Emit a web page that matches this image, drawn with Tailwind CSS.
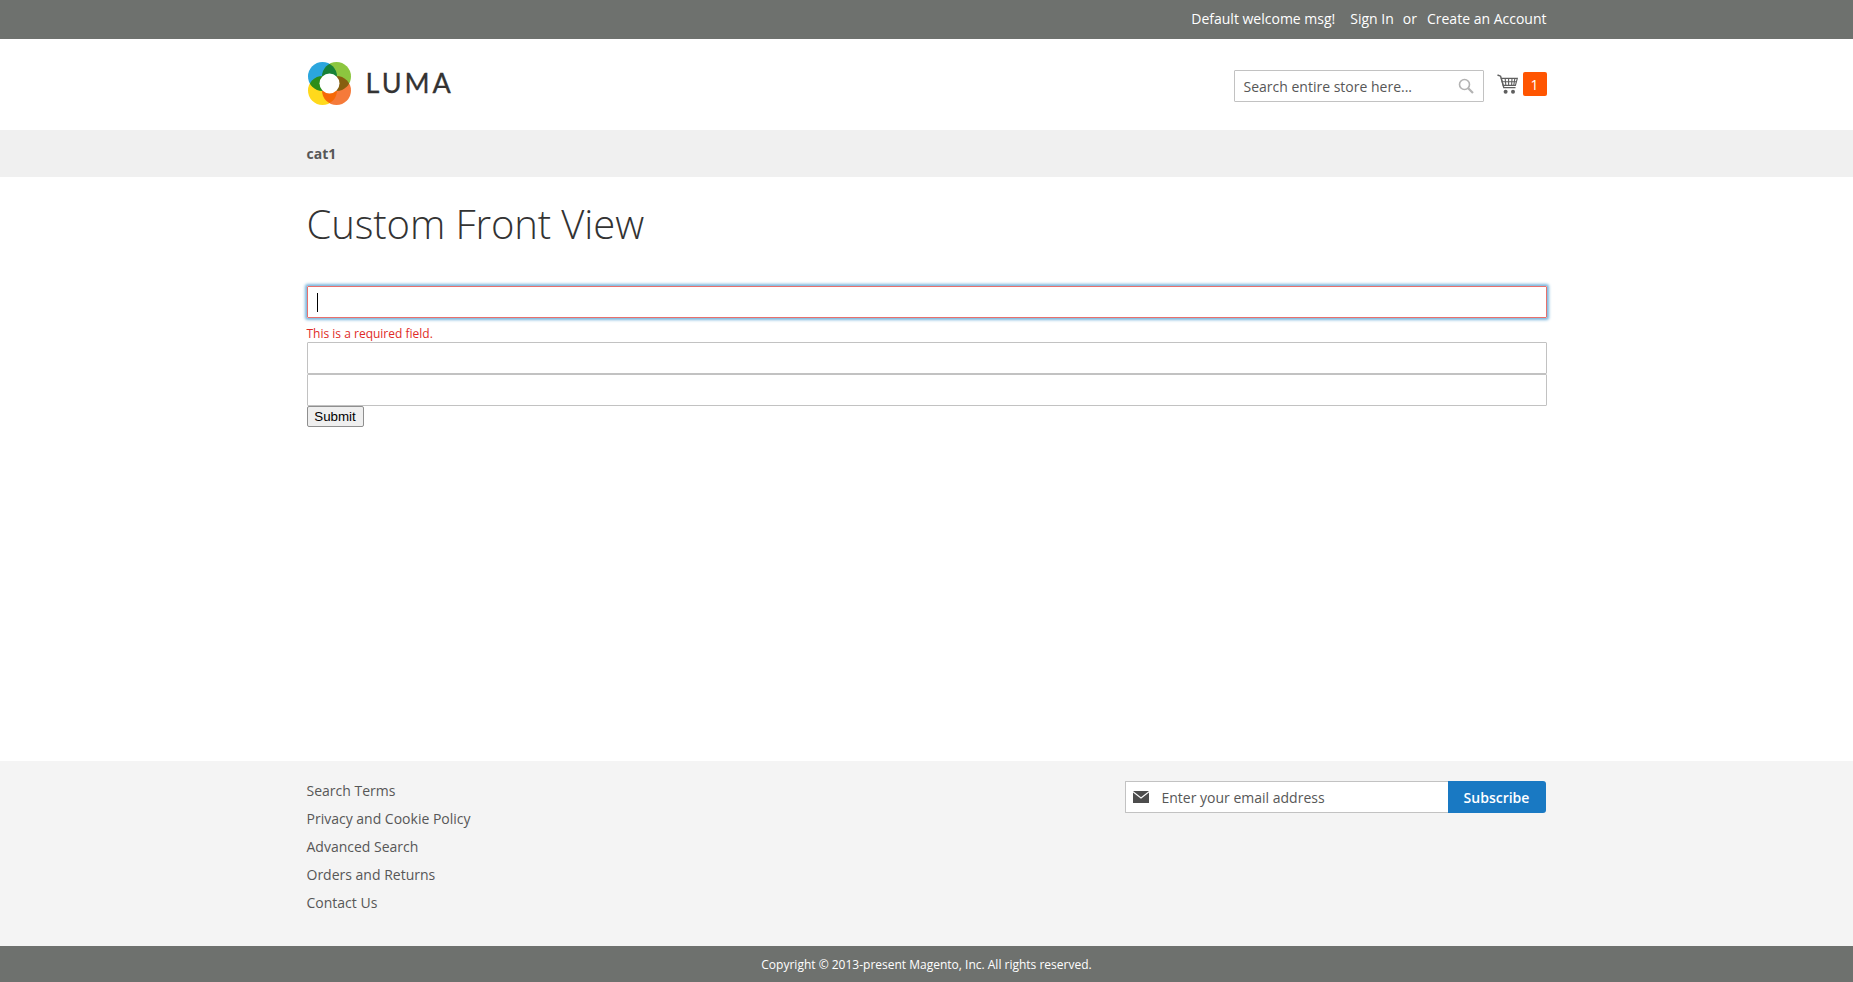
<!DOCTYPE html>
<html lang="en">
<head>
    <meta charset="UTF-8">
    <title>Custom Front View</title>
    <script src="https://cdn.jsdelivr.net/npm/@tailwindcss/browser@4"></script>
</head>
<body class="font-['Open_Sans',sans-serif] text-[14px] text-[#333] bg-white">
    <div class="flex flex-col h-[982px] overflow-hidden">
        <!-- top bar -->
        <div class="bg-[#6e716e] h-[39px] shrink-0">
            <div class="w-[1240px] ml-[306.5px] h-full flex justify-end items-center text-white pb-[2px]">
                <span>Default welcome msg!</span>
                <a class="ml-[15px]">Sign In</a>
                <span class="ml-[9px]">or</span>
                <a class="ml-[10px]">Create an Account</a>
            </div>
        </div>

        <!-- header -->
        <div class="h-[91px] shrink-0 bg-white">
            <div class="w-[1240px] ml-[306.5px] h-full flex items-start justify-between">
                <div class="flex items-center mt-[22px]">
                    <svg width="45" height="45" viewBox="0 0 45 45" class="isolate">
                        <g style="mix-blend-mode:multiply"><circle cx="15.5" cy="15.5" r="14.5" fill="#2ba6de"/></g>
                        <g style="mix-blend-mode:multiply"><circle cx="29.5" cy="15.5" r="14.5" fill="#8cc63f"/></g>
                        <g style="mix-blend-mode:multiply"><circle cx="15.5" cy="29.5" r="14.5" fill="#ffd91c"/></g>
                        <g style="mix-blend-mode:multiply"><circle cx="29.5" cy="29.5" r="14.5" fill="#f57a3a"/></g>
                        <circle cx="22.5" cy="22.5" r="10" fill="#fff"/>
                    </svg>
                    <span class="ml-[14px] mb-[2px] font-['Lato',sans-serif] text-[27px] leading-none tracking-[3px] font-normal text-[#333] [-webkit-text-stroke:0.3px_#333]">LUMA</span>
                </div>
                <div class="flex items-start mt-[31px]">
                    <div class="w-[250px] h-[32px] border border-[#c2c2c2] bg-white rounded-[1px] flex items-center justify-between pl-[9px] pr-[9px]">
                        <span class="text-[#575757]">Search entire store here...</span>
                        <svg width="16" height="16" viewBox="0 0 16 16" fill="none" stroke="#b3b3b3" stroke-width="1.6"><circle cx="6.5" cy="6.5" r="5"/><path d="M10.2 10.2 15 15" stroke-width="2.2"/></svg>
                    </div>
                    <svg width="21" height="21" viewBox="0 0 21 21" class="ml-[13px] mt-[4px]" fill="none" stroke="#5f5f5f">
                        <path d="M0.5 1 3.6 2.2 6.8 13.6H18.5" stroke-width="1.4"/>
                        <path d="M4.3 4.4H20.3L18.4 11.4H6.2Z" stroke-width="1.1"/>
                        <path d="M8.2 4.6 8.8 11.2M11.6 4.6V11.2M15 4.6 14.6 11.2M17.8 4.6 16.8 11.2M5 7.8H19.4" stroke-width="1.1"/>
                        <circle cx="8.6" cy="17.8" r="2" fill="#5f5f5f" stroke="none"/><circle cx="16" cy="17.8" r="2" fill="#5f5f5f" stroke="none"/>
                    </svg>
                    <span class="ml-[5px] mt-[2px] w-[24px] h-[24px] bg-[#ff5501] rounded-[2px] text-white flex items-center justify-center text-[14px]">1</span>
                </div>
            </div>
        </div>

        <!-- nav -->
        <div class="h-[47px] shrink-0 bg-[#f0f0f0]">
            <div class="w-[1240px] ml-[306.5px] h-full flex items-center font-bold text-[#575757]">cat1</div>
        </div>

        <!-- main -->
        <main class="flex-1">
            <div class="w-[1240px] ml-[306.5px]">
                <h1 class="text-[40px] font-light leading-[50px] text-[#333] pt-[22px] tracking-[-0.1px]">Custom Front View</h1>
                <form class="mt-[37px]">
                    <div class="relative h-[32px] border border-[#e8706c] rounded-[1px] shadow-[0_0_3px_2px_#7ab5dc] flex items-center pl-[9px]">
                        <span class="w-[1px] h-[19px] bg-black"></span>
                    </div>
                    <div class="text-[12px] text-[#e02b27] leading-[16px] h-[24px] pt-[8px]">This is a required field.</div>
                    <div class="h-[32px] border border-[#c2c2c2] rounded-[1px] bg-white"></div>
                    <div class="h-[32px] border border-[#c2c2c2] rounded-[1px] bg-white"></div>
                    <button type="button" class="block w-[57px] h-[21px] border border-[#8f8f8f] bg-[#efefef] rounded-[2px] font-['Liberation_Sans',sans-serif] text-[13.33px] leading-none text-black">Submit</button>
                </form>
            </div>
        </main>

        <!-- footer -->
        <footer class="h-[185px] shrink-0 bg-[#f4f4f4]">
            <div class="w-[1240px] ml-[306.5px] flex justify-between">
                <ul class="pt-[20px] text-[#575757] leading-[20px] flex flex-col gap-[8px]">
                    <li>Search Terms</li>
                    <li>Privacy and Cookie Policy</li>
                    <li>Advanced Search</li>
                    <li>Orders and Returns</li>
                    <li>Contact Us</li>
                </ul>
                <div class="flex mt-[20px] mr-[1px] h-[32px] w-[421px]">
                    <div class="flex-1 border border-[#c2c2c2] border-r-0 bg-white rounded-l-[1px] flex items-center pl-[7px]">
                        <svg width="16" height="12" viewBox="0 0 16 12" fill="#4d4d4d"><path d="M0 0H16L8 6.2Z"/><path d="M0 1.6V12H16V1.6L8 7.8Z"/></svg>
                        <span class="ml-[13px] text-[#575757]">Enter your email address</span>
                    </div>
                    <div class="w-[98px] bg-[#1979c3] rounded-r-[3px] text-white font-semibold flex items-center justify-center">Subscribe</div>
                </div>
            </div>
        </footer>

        <!-- copyright -->
        <div class="h-[36px] shrink-0 bg-[#6e716e] text-white text-[12px] flex items-center justify-center pt-[1px]">Copyright © 2013-present Magento, Inc. All rights reserved.</div>
    </div>
</body>
</html>
